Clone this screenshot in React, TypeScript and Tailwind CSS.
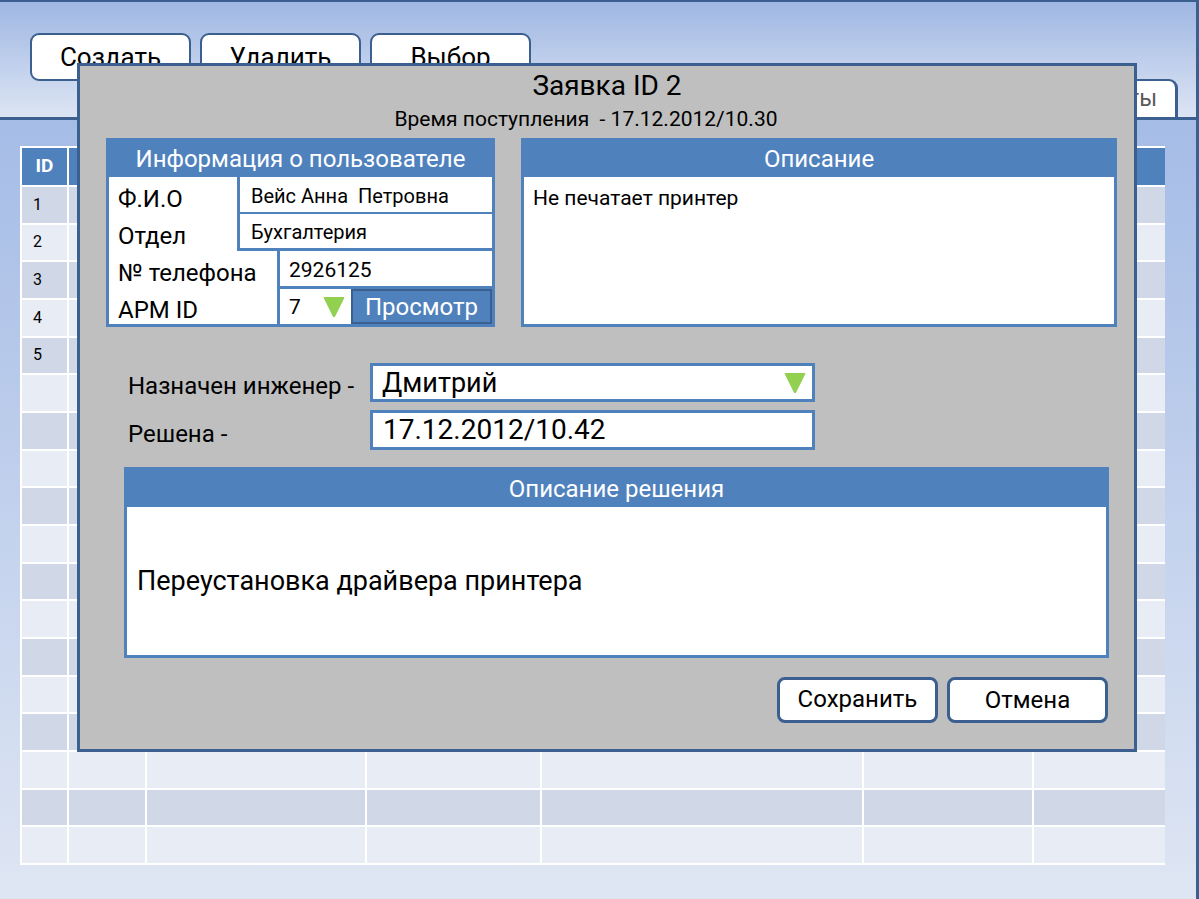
import React from 'react';

const font = { fontFamily: 'Roboto, "Noto Sans", sans-serif' };

function Triangle() {
  return (
    <svg width="22" height="22" viewBox="0 0 22 22">
      <path d="M1 1.5 L21 1.5 L11.6 20.5 Q11 21.5 10.4 20.5 Z" fill="#92d050" stroke="#92d050" strokeWidth="1" strokeLinejoin="round" />
    </svg>
  );
}

function TopButton({ label }: { label: string }) {
  return (
    <div className="w-[161px] h-[48px] rounded-[9px] border-2 border-[#3b5f8e] bg-white flex items-center justify-center text-[26px] text-black">
      {label}
    </div>
  );
}

function DataTable() {
  const rows = Array.from({ length: 18 }, (_, i) => i);
  const cols = 7;
  return (
    <div className="w-[1145px] h-[719px] bg-white p-[2px] grid grid-cols-[45px_76px_218px_173px_320px_168px_131px] grid-rows-[37px_repeat(18,1fr)] gap-[2px]">
      <div className="bg-[#4f81bd] text-white font-bold text-[19px] flex items-center justify-center">ID</div>
      {Array.from({ length: cols - 1 }, (_, i) => (
        <div key={`h${i}`} className="bg-[#4f81bd]" />
      ))}
      {rows.map((r) =>
        Array.from({ length: cols }, (_, c) => (
          <div
            key={`${r}-${c}`}
            className={`${r % 2 === 0 ? 'bg-[#d0d8e7]' : 'bg-[#e8ecf4]'} flex items-center pl-[11px] text-[16px] text-black`}
          >
            {c === 0 && r < 5 ? r + 1 : ''}
          </div>
        ))
      )}
    </div>
  );
}

function UserInfo() {
  return (
    <div className="w-[389px] h-[189px] border-[3px] border-[#4f81bd] bg-white flex flex-col">
      <div className="h-[36px] shrink-0 bg-[#4f81bd] text-white text-[24px] leading-[30px] flex items-center justify-center">
        Информация о пользователе
      </div>
      <div className="h-[37px] shrink-0 flex">
        <div className="flex-1 flex items-center pl-[9px] pt-[6px] text-[24px] leading-[30px]">Ф.И.О</div>
        <div className="w-[255px] border-l-[3px] border-b-[2px] border-[#4f81bd] flex items-center pl-[11px] pt-[2px] text-[20px] leading-[26px]">
          Вейс Анна&nbsp; Петровна
        </div>
      </div>
      <div className="h-[37px] shrink-0 flex">
        <div className="flex-1 flex items-center pl-[9px] pt-[6px] text-[24px] leading-[30px]">Отдел</div>
        <div className="w-[255px] border-l-[3px] border-b-[3px] border-[#4f81bd] flex items-center pl-[11px] pt-[2px] text-[20px] leading-[26px]">
          Бухгалтерия
        </div>
      </div>
      <div className="h-[38px] shrink-0 flex">
        <div className="flex-1 flex items-center pl-[9px] pt-[6px] text-[24px] leading-[30px]">№ телефона</div>
        <div className="w-[215px] border-l-[3px] border-b-[3px] border-[#4f81bd] flex items-center pl-[9px] pt-[2px] text-[21px] leading-[26px]">
          2926125
        </div>
      </div>
      <div className="flex-1 flex min-h-0">
        <div className="flex-1 flex items-center pl-[9px] pt-[6px] text-[24px] leading-[30px]">APM ID</div>
        <div className="w-[74px] border-l-[3px] border-[#4f81bd] flex items-center justify-between pl-[9px] pr-[6px] text-[21px] leading-[26px]">
          <span>7</span>
          <Triangle />
        </div>
        <div className="w-[141px] bg-[#4f81bd] border-2 border-[#3b5f8e] text-white text-[24px] leading-[30px] flex items-center justify-center">
          Просмотр
        </div>
      </div>
    </div>
  );
}

function Description() {
  return (
    <div className="w-[596px] h-[189px] border-[3px] border-[#4f81bd] bg-white flex flex-col">
      <div className="h-[36px] shrink-0 bg-[#4f81bd] text-white text-[24px] leading-[30px] flex items-center justify-center">Описание</div>
      <div className="pl-[9px] pt-[8px] text-[21px] leading-[26px] text-black">Не печатает принтер</div>
    </div>
  );
}

function Modal() {
  return (
    <div className="absolute left-[77px] top-[63px] w-[1060px] h-[689px] bg-[#bfbfbf] border-[3px] border-[#3b5f8e] flex flex-col text-black">
      <div className="h-[40px] shrink-0 text-center text-[28px] leading-[40px]">Заявка ID 2</div>
      <div className="mt-[1px] h-[24px] shrink-0 text-center text-[21px] leading-[24px] pr-[42px]">
        Время поступления&nbsp; - 17.12.2012/10.30
      </div>
      <div className="mt-[7px] flex gap-[26px] pl-[26px] shrink-0">
        <UserInfo />
        <Description />
      </div>
      <div className="mt-[36px] h-[39px] shrink-0 flex items-center pl-[48px]">
        <div className="w-[242px] pt-[7px] text-[24px] leading-[30px]">Назначен инженер -</div>
        <div className="w-[445px] h-[39px] border-[3px] border-[#4f81bd] bg-white flex items-center justify-between pl-[9px] pr-[6px] text-[27px] leading-[32px]">
          <span>Дмитрий</span>
          <Triangle />
        </div>
      </div>
      <div className="mt-[8px] h-[40px] shrink-0 flex items-center pl-[48px]">
        <div className="w-[242px] pt-[7px] text-[24px] leading-[30px]">Решена -</div>
        <div className="w-[445px] h-[40px] border-[3px] border-[#4f81bd] bg-white flex items-center pl-[10px] text-[28px] leading-[32px]">
          17.12.2012/10.42
        </div>
      </div>
      <div className="mt-[17px] ml-[44px] w-[985px] h-[191px] shrink-0 border-[3px] border-[#4f81bd] bg-white flex flex-col">
        <div className="h-[37px] shrink-0 bg-[#4f81bd] text-white text-[24px] leading-[30px] flex items-center justify-center">
          Описание решения
        </div>
        <div className="flex-1 flex items-center pl-[10px] text-[27px] leading-[32px]">Переустановка драйвера принтера</div>
      </div>
      <div className="mt-[19px] h-[46px] shrink-0 flex justify-end gap-[9px] pr-[26px]">
        <div className="w-[161px] h-[46px] rounded-[8px] border-[3px] border-[#3b5f8e] bg-white flex items-center justify-center text-[24px] leading-[30px] pb-[3px]">
          Сохранить
        </div>
        <div className="w-[161px] h-[46px] rounded-[8px] border-[3px] border-[#3b5f8e] bg-white flex items-center justify-center text-[24px] leading-[30px]">
          Отмена
        </div>
      </div>
    </div>
  );
}

export default function App() {
  return (
    <div className="relative w-[1199px] h-[899px] overflow-hidden bg-[#dfe6f3]" style={font}>
      <div className="h-[120px] border-t-2 border-r-[3px] border-b-[3px] border-[#3b5f8e] bg-gradient-to-b from-[#9fb7e3] to-[#dde5f3] flex items-start pl-[30px] pr-[18px] pt-[31px] gap-[9px]">
        <TopButton label="Создать" />
        <TopButton label="Удалить" />
        <TopButton label="Выбор" />
        <div className="ml-auto self-end w-[160px] h-[38px] rounded-tr-[9px] border-t-2 border-r-[3px] border-l-2 border-[#3b5f8e] bg-white flex items-center justify-end pr-[18px] text-[23px] text-[#595959]">
          Отчеты
        </div>
      </div>
      <div className="h-[779px] border-r-[3px] border-[#3b5f8e] bg-gradient-to-b from-[#a5bce6] to-[#dfe6f3] pl-[20px] pt-[26px]">
        <DataTable />
      </div>
      <Modal />
    </div>
  );
}
